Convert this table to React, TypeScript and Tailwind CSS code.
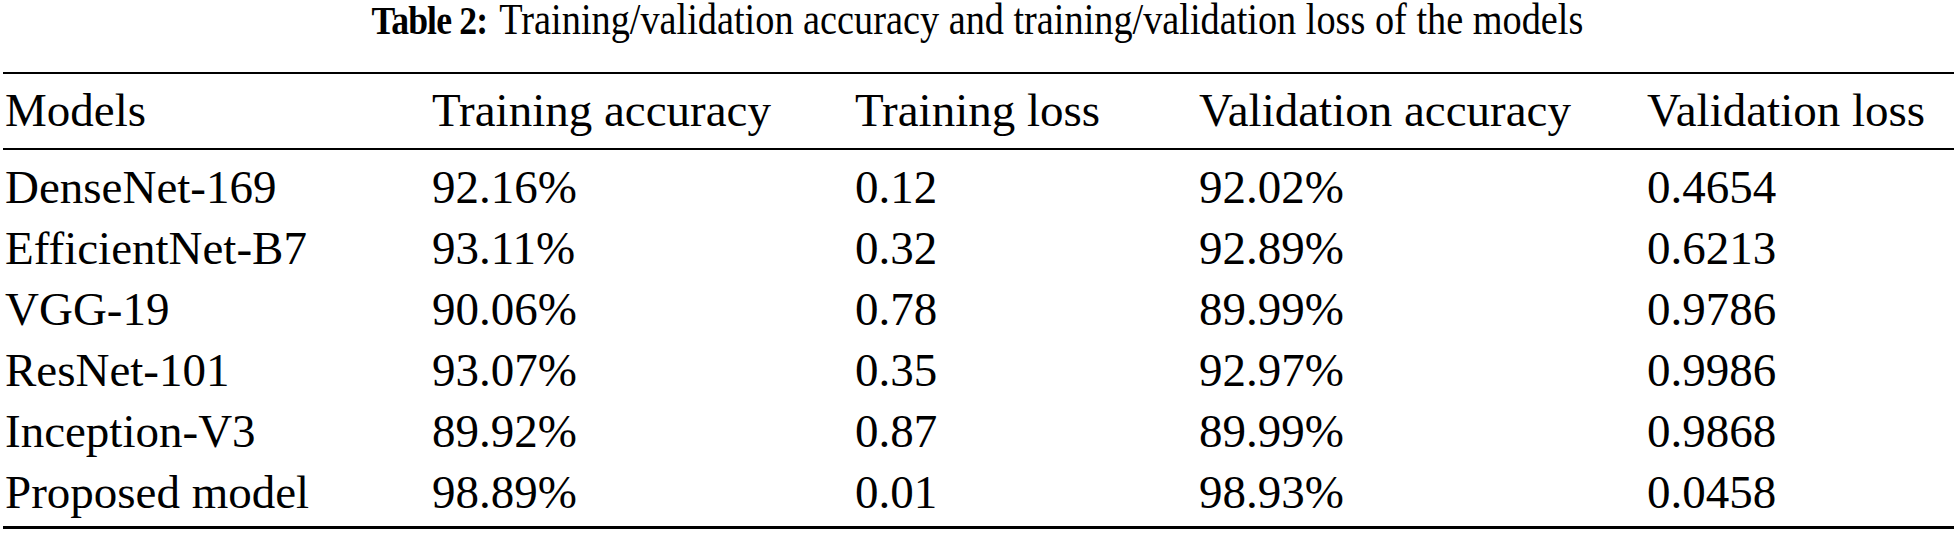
const rows = [
  ["DenseNet-169", "92.16%", "0.12", "92.02%", "0.4654"],
  ["EfficientNet-B7", "93.11%", "0.32", "92.89%", "0.6213"],
  ["VGG-19", "90.06%", "0.78", "89.99%", "0.9786"],
  ["ResNet-101", "93.07%", "0.35", "92.97%", "0.9986"],
  ["Inception-V3", "89.92%", "0.87", "89.99%", "0.9868"],
  ["Proposed model", "98.89%", "0.01", "98.93%", "0.0458"],
];

const head = ["Models", "Training accuracy", "Training loss", "Validation accuracy", "Validation loss"];

const cols = "grid grid-cols-[427px_423px_344px_448px_1fr] whitespace-nowrap";

export default function App() {
  return (
    <div className="w-[1954px] h-[533px] bg-white text-black font-['Liberation_Serif',serif] overflow-hidden">
      {/* caption, the original face is a condensed Times */}
      <div className="flex justify-center h-[40px] mb-8">
        <div className="inline-block whitespace-nowrap scale-x-[0.87] leading-[40px]">
          <span className="font-bold text-[41px] tracking-[-1px]">Table 2:</span>
          <span className="ml-[14px] text-[44px]">
            Training/validation accuracy and training/validation loss of the models
          </span>
        </div>
      </div>

      <div className="ml-[3px] border-t-2 border-black">
        <div className={`${cols} pl-[2px] pt-[6px] pb-[7px] text-[47px] leading-[61px] border-b-2 border-black`}>
          {head.map((h) => (
            <div key={h}>{h}</div>
          ))}
        </div>

        <div className="pl-[2px] pt-[7px] pb-[3px] text-[47px] leading-[61px] border-b-[3px] border-black">
          {rows.map((r) => (
            <div key={r[0]} className={cols}>
              {r.map((c, i) => (
                <div key={i}>{c}</div>
              ))}
            </div>
          ))}
        </div>
      </div>
    </div>
  );
}
